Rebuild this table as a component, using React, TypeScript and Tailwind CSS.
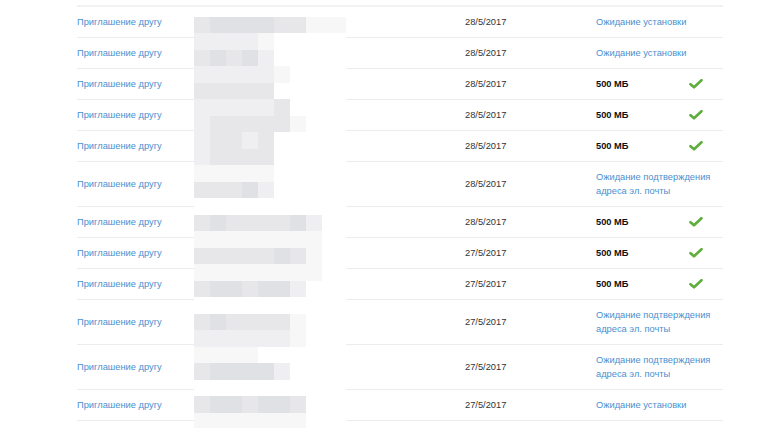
type Status = 'install' | 'email' | 'bonus'

const rows: { date: string; status: Status }[] = [
  { date: '28/5/2017', status: 'install' },
  { date: '28/5/2017', status: 'install' },
  { date: '28/5/2017', status: 'bonus' },
  { date: '28/5/2017', status: 'bonus' },
  { date: '28/5/2017', status: 'bonus' },
  { date: '28/5/2017', status: 'email' },
  { date: '28/5/2017', status: 'bonus' },
  { date: '27/5/2017', status: 'bonus' },
  { date: '27/5/2017', status: 'bonus' },
  { date: '27/5/2017', status: 'email' },
  { date: '27/5/2017', status: 'email' },
  { date: '27/5/2017', status: 'install' },
]

// pixelated names column, one string per 16.5px band
const blur = [
  '..........',
  '3444433111',
  '22221WWWWW',
  '34342WWWWW',
  '222221WWWW',
  '33333WWWWW',
  '222223WWWW',
  '2333331WWW',
  '23323WWWWW',
  '23333WWWWW',
  '11111WWWWW',
  '33342WWWWW',
  'WWWWWWWWWW',
  '34333342WW',
  '11111111WW',
  '33333431WW',
  '11111111WW',
  '3443442WWW',
  'WWWWWWWWWW',
  '3433331WWW',
  '2222221WWW',
  '1111WWWWWW',
  '344442WWWW',
  'WWWWWWWWWW',
  '3443443WWW',
  '1111111WWW',
]

const shade: Record<string, string> = {
  '.': 'bg-transparent',
  W: 'bg-white',
  '1': 'bg-[#f7f7f8]',
  '2': 'bg-[#efeff1]',
  '3': 'bg-[#e7e7ea]',
  '4': 'bg-[#e0e1e4]',
}

function Check() {
  return (
    <svg width="14" height="10" viewBox="0 0 14 10" className="mr-[20px] shrink-0">
      <polyline points="1.5,5.2 5,8.3 12.5,1.2" fill="none" stroke="#5fae3b" strokeWidth="2.6" strokeLinecap="round" strokeLinejoin="round" />
    </svg>
  )
}

function StatusCell({ status }: { status: Status }) {
  if (status === 'bonus') {
    return (
      <div className="flex items-center justify-between">
        <span className="font-bold text-[#111]">500 МБ</span>
        <Check />
      </div>
    )
  }
  if (status === 'email') {
    return (
      <span className="text-[#4a8fcf] whitespace-nowrap">
        Ожидание подтверждения
        <br />
        адреса эл. почты
      </span>
    )
  }
  return <span className="text-[#4a8fcf] whitespace-nowrap">Ожидание установки</span>
}

export default function App() {
  return (
    <div className="relative w-[760px] h-[428px] overflow-hidden bg-white font-['Liberation_Sans',Arial,sans-serif] text-[9.3px] leading-[14px]">
      <div className="ml-[77px] mt-[5px] w-[646px] border-t-2 border-[#f1f2f4]">
        {rows.map((r, i) => (
          <div key={i} className="grid grid-cols-[117px_271px_131px_1fr] items-center py-2 border-b border-[#ececef]">
            <a className="text-[#4a8fcf]">Приглашение другу</a>
            <div />
            <span className="text-[#333]">{r.date}</span>
            <StatusCell status={r.status} />
          </div>
        ))}
      </div>

      <div className="absolute left-[194px] top-0 w-[152px] overflow-hidden flex flex-col">
        {blur.map((line, y) => (
          <div key={y} className="flex h-[16.5px] shrink-0">
            {line.split('').map((c, x) => (
              <div key={x} className={`w-[16px] shrink-0 ${shade[c]}`} />
            ))}
          </div>
        ))}
      </div>
    </div>
  )
}
